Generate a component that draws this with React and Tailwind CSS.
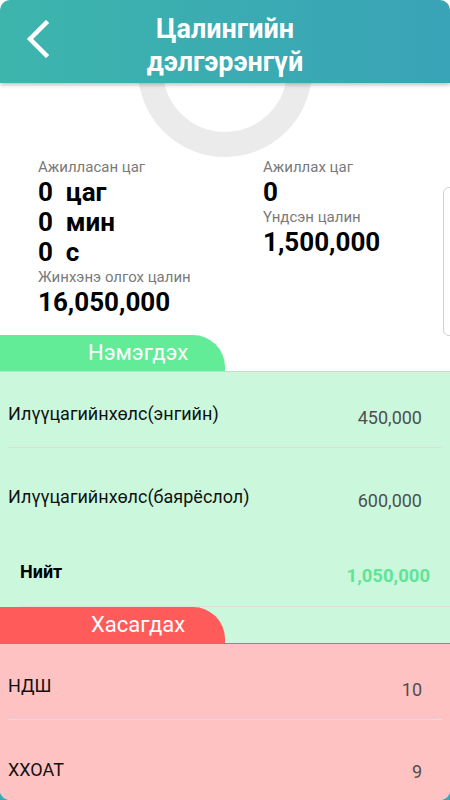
import React from "react";

function Stat({ label, children }) {
  return (
    <div>
      <div className="text-[15px] leading-[20px] text-[#7a7a7a]">{label}</div>
      {children}
    </div>
  );
}

function Value({ children }) {
  return <div className="text-[26px] leading-[30px] font-bold text-black">{children}</div>;
}

function Row({ label, value, labelTop, valueTop }) {
  return (
    <div className="flex items-start justify-between pl-[8px] pr-[28px]">
      <div className={`text-[18px] leading-[22px] font-normal text-[#111] ${labelTop}`}>{label}</div>
      <div className={`text-[18px] leading-[20px] text-[#4f4f4f] ${valueTop}`}>{value}</div>
    </div>
  );
}

export default function App() {
  return (
    <div className="w-[450px] h-[800px] bg-linear-to-b from-white from-50% to-[#3aa9b1] to-50% font-['Roboto',sans-serif]">
      <div className="relative w-full h-full rounded-[10px] overflow-hidden bg-white flex flex-col">
        {/* header */}
        <div className="relative z-10 h-[83px] shrink-0 bg-linear-to-r from-[#3db5ac] to-[#39a3b7] shadow-[0_2px_4px_rgba(0,0,0,0.25)] pt-[13px] text-center">
          <svg className="absolute left-[26px] top-[20px]" width="24" height="38" viewBox="0 0 24 38">
            <polyline points="20,3 4,19 20,35" fill="none" stroke="white" strokeWidth="4.5" strokeLinecap="square" />
          </svg>
          <div className="text-white font-bold text-[27px] leading-[33px]">
            Цалингийн
            <br />
            дэлгэрэнгүй
          </div>
        </div>

        {/* ring behind header */}
        <div className="absolute left-[138px] top-[-17px] w-[174px] h-[174px] rounded-full border-[25px] border-[#ebebeb]" />

        {/* summary */}
        <div className="relative h-[252px] shrink-0 pt-[74px] pl-[38px] flex">
          <div className="w-[225px]">
            <Stat label="Ажилласан цаг">
              <Value>0&nbsp;&nbsp;цаг</Value>
              <Value>0&nbsp;&nbsp;мин</Value>
              <Value>0&nbsp;&nbsp;с</Value>
            </Stat>
            <Stat label="Жинхэнэ олгох цалин">
              <Value>16,050,000</Value>
            </Stat>
          </div>
          <div>
            <Stat label="Ажиллах цаг">
              <Value>0</Value>
            </Stat>
            <Stat label="Үндсэн цалин">
              <Value>1,500,000</Value>
            </Stat>
          </div>
          <div className="absolute left-[443px] top-[104px] w-[30px] h-[149px] rounded-md border border-[#d2d2d2]" />
        </div>

        {/* additions */}
        <div className="h-[36px] w-[225px] shrink-0 bg-[#62ec97] rounded-tr-[32px] pl-[88px] text-white text-[22px] leading-[36px]">
          Нэмэгдэх
        </div>
        <div className="shrink-0 bg-[#cbf8dc] border-t border-[#a3efbf]">
          <div className="h-[75px]">
            <Row label="Илүүцагийнхөлс(энгийн)" value="450,000" labelTop="mt-[31px]" valueTop="mt-[36px]" />
          </div>
          <div className="h-px mx-[8px] bg-[#dcdfdc]" />
          <div className="h-[80px]">
            <Row label="Илүүцагийнхөлс(баярёслол)" value="600,000" labelTop="mt-[38px]" valueTop="mt-[43px]" />
          </div>
          <div className="h-[78px] flex items-start justify-between pl-[20px] pr-[20px]">
            <div className="mt-[34px] text-[18px] leading-[20px] font-bold text-black">Нийт</div>
            <div className="mt-[37px] text-[18.5px] leading-[22px] font-bold text-[#5ee596]">1,050,000</div>
          </div>
          <div className="h-px ml-[20px] bg-[#dcdfdc]" />
          <div className="h-[36px] w-[225px] bg-[#ff5b5b] rounded-tr-[32px] pl-[91px] text-white text-[22px] leading-[36px]">
            Хасагдах
          </div>
        </div>

        {/* deductions */}
        <div className="flex-1 bg-[#ffc2c2] border-t border-[#f25d5d]">
          <div className="h-[75px]">
            <Row label="НДШ" value="10" labelTop="mt-[31px]" valueTop="mt-[36px]" />
          </div>
          <div className="h-px mx-[8px] bg-[#dcdde6]" />
          <div className="h-[80px]">
            <Row label="ХХОАТ" value="9" labelTop="mt-[39px]" valueTop="mt-[42px]" />
          </div>
        </div>
      </div>
    </div>
  );
}
